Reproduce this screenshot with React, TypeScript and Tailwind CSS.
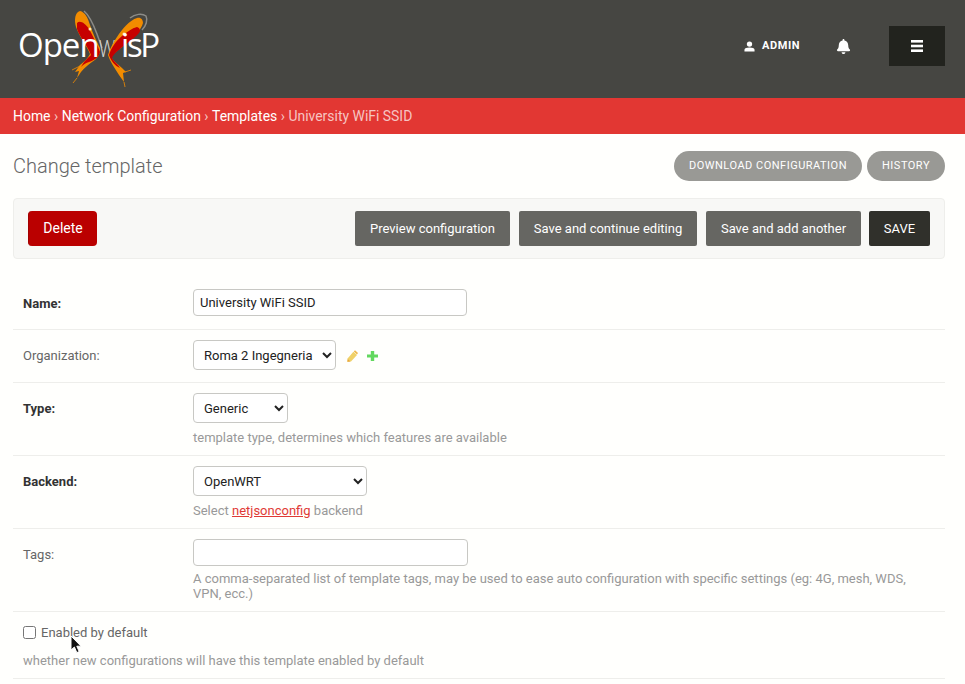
import React from 'react';
import { FaBell } from 'react-icons/fa';

function Logo() {
  return (
    <svg width="150" height="90" viewBox="18 4 150 90" className="block">
      <path d="M84 11 C90 16 94 26 97 34 C99 40 101 44 102 48" stroke="#8c8c88" strokeWidth="1.5" fill="none" />
      <path d="M130 18 C135 14 142 13 146 16 C148 20 146 26 142 30" stroke="#8c8c88" strokeWidth="1.5" fill="none" />
      <text x="0" y="57" fill="#d0d0cc" fontFamily="Open Sans, sans-serif" fontSize="31" fontWeight="300" textAnchor="middle" transform="translate(107 0) scale(0.72 1)">w</text>
      <path d="M80 11 C85 12 88 18 90 25 C93 34 97 42 100 48 C101 54 97 59 92 62 C88 65 84 68 81 72 L77 78 L79 71 L75 72 L80 65 C84 62 88 58 90 54 C87 46 80 38 76 27 C74 20 75 12 80 11 Z" fill="#f28c00" />
      <path d="M77 23 C80 20 85 23 89 29 C93 36 97 44 100 52 C99 57 95 60 89 62 C85 63 83 65 81 67 C84 61 88 58 91 55 C88 46 80 38 77 29 Z" fill="#c60000" />
      <path d="M137 18 C141 17 143 20 143 23 C141 30 134 37 126 44 C118 50 113 54 111 57 C114 62 119 65 122 68 L126 72 L123 73 L124 82 L119 75 C115 68 110 62 108 55 C110 48 113 43 117 37 C122 29 130 20 137 18 Z" fill="#f28c00" />
      <path d="M137 27 C140 28 141 31 139 33 C134 39 126 44 120 49 C116 52 113 55 112 58 C114 62 118 64 120 68 C115 66 111 61 109 55 C111 48 116 41 122 36 C127 32 132 28 137 27 Z" fill="#c60000" />
      <path d="M80 66 L72 70 M77 78 L73 83 M124 82 L125 87 M125 72 L131 70" stroke="#f28c00" strokeWidth="0.8" />
      <circle cx="90" cy="29" r="1.5" fill="#ffe9b0" />
      <circle cx="124" cy="34" r="1.5" fill="#ffe9b0" />
      <text x="18" y="57" fill="#fff" fontFamily="Open Sans, sans-serif" fontSize="33" fontWeight="400" letterSpacing="-1">Open</text>
      <text x="121" y="57" fill="#fff" fontFamily="Open Sans, sans-serif" fontSize="33" fontWeight="400" letterSpacing="-2.4">isP</text>
    </svg>
  );
}

function Row({ label, bold, className, labelClass, children }: { label: string; bold?: boolean; className: string; labelClass?: string; children: React.ReactNode }) {
  return (
    <div className={`flex border-b border-[#eeeeeb] pl-[10px] ${className}`}>
      <div className={`w-[170px] shrink-0 text-[13px] leading-[16px] ${bold ? 'font-bold text-[#333]' : 'text-[#666]'} ${labelClass ?? ''}`}>{label}</div>
      <div className="min-w-0 flex-1">{children}</div>
    </div>
  );
}

const selectClass = 'block h-[30px] rounded-[4px] border border-[#c8c8c4] bg-white pl-[6px] text-[13px] text-[#222]';

export default function App() {
  return (
    <div className="h-[684px] overflow-hidden bg-[#fffffd] font-['Roboto',sans-serif]">
      <header className="flex h-[98px] items-center bg-[#464642] pl-[18px] pr-[20px]">
        <Logo />
        <div className="ml-auto flex items-center pb-[6px]">
          <svg width="11" height="11" viewBox="0 0 12 12" className="mr-[7px]" fill="#fff">
            <circle cx="6" cy="3.4" r="2.9" />
            <path d="M0.5 11.5 V9.6 C0.5 7.8 3 7 6 7 C9 7 11.5 7.8 11.5 9.6 V11.5 Z" />
          </svg>
          <span className="text-[11px] font-bold tracking-[0.55px] text-white">ADMIN</span>
          <FaBell className="ml-[36px] text-[15px] text-white" />
          <div className="ml-[38px] flex h-[40px] w-[56px] items-center justify-center bg-[#22231e]">
            <svg width="12" height="12" viewBox="0 0 12 12" fill="#fff">
              <rect y="0" width="12" height="2.6" />
              <rect y="4.7" width="12" height="2.6" />
              <rect y="9.4" width="12" height="2.6" />
            </svg>
          </div>
        </div>
      </header>

      <nav className="flex h-[36px] items-center bg-[#e23733] pl-[13px] text-[13.95px] text-white">
        Home <span className="mx-[3.5px] text-[#f6c4c2]">›</span> Network Configuration <span className="mx-[3.5px] text-[#f6c4c2]">›</span> Templates <span className="mx-[3.5px] text-[#f6c4c2]">›</span> <span className="text-[#f6c4c2]">University WiFi SSID</span>
      </nav>

      <main className="pl-[13px] pr-[20px]">
        <div className="flex h-[64px] items-center justify-between">
          <h1 className="text-[20px] font-light text-[#666]">Change template</h1>
          <div className="flex gap-[5px]">
            <span className="flex h-[30px] items-center rounded-full bg-[#999995] px-[15px] text-[11px] tracking-[0.5px] text-white">DOWNLOAD CONFIGURATION</span>
            <span className="flex h-[30px] items-center rounded-full bg-[#999995] px-[15px] text-[11px] tracking-[0.5px] text-white">HISTORY</span>
          </div>
        </div>

        <div className="flex h-[61px] items-center rounded-[4px] border border-[#eeeeeb] bg-[#f8f8f6] px-[14px]">
          <button className="h-[35px] w-[69px] rounded-[4px] border-l border-[#a30000] bg-[#ba0000] text-[14px] text-[#fff]">Delete</button>
          <div className="ml-auto flex gap-[9px]">
            <button className="h-[35px] w-[155px] rounded-[2px] bg-[#666662] text-[13px] text-white">Preview configuration</button>
            <button className="h-[35px] w-[178px] rounded-[2px] bg-[#666662] text-[13px] text-white">Save and continue editing</button>
            <button className="h-[35px] w-[155px] rounded-[2px] bg-[#666662] text-[13px] text-white">Save and add another</button>
            <button className="-ml-[1px] h-[35px] w-[61px] rounded-[2px] bg-[#30302b] text-[13px] text-white">SAVE</button>
          </div>
        </div>

        <div className="pt-[17px]">
          <Row label="Name:" bold labelClass="pt-[7px]" className="h-[54px] pt-[13px]">
            <input defaultValue="University WiFi SSID" className="block h-[27px] w-[274px] rounded-[4px] border border-[#c8c8c4] bg-white px-[6px] text-[13px] text-[#222]" />
          </Row>
          <Row label="Organization:" labelClass="pt-[1px]" className="h-[53px] items-center pb-[2px]">
            <div className="flex items-center">
              <select className={`${selectClass} w-[143px]`}>
                <option>Roma 2 Ingegneria</option>
              </select>
              <svg width="11" height="12" viewBox="0 0 11 12" className="ml-[11px] mt-[1px]">
                <path d="M0.6 8.6 L6.4 1.8 L10 5 L4 11.4 L0.4 11.8 Z" fill="#f0d168" />
                <path d="M6.8 1.4 L8 0.2 L11 3 L10 4.6 Z" fill="#efb94e" />
                <path d="M0.8 9 L0.3 11.8 L3.4 11.4 Z" fill="#e8a63c" />
              </svg>
              <svg width="11" height="10" viewBox="0 0 11 10" className="ml-[9px] mt-[1px]" fill="#62d85f">
                <path d="M3.8 0 H7.2 V3.4 H11 V6.6 H7.2 V10 H3.8 V6.6 H0 V3.4 H3.8 Z" />
              </svg>
            </div>
          </Row>
          <Row label="Type:" bold labelClass="pt-[8px]" className="h-[73px] pt-[10px]">
            <select className={`${selectClass} w-[95px]`}>
              <option>Generic</option>
            </select>
            <p className="mt-[7px] text-[13px] leading-[16px] text-[#999]">template type, determines which features are available</p>
          </Row>
          <Row label="Backend:" bold labelClass="pt-[8px]" className="h-[73px] pt-[10px]">
            <select className={`${selectClass} w-[174px]`}>
              <option>OpenWRT</option>
            </select>
            <p className="mt-[7px] text-[13px] leading-[16px] text-[#999]">
              Select <a className="text-[#df3b36] underline">netjsonconfig</a> backend
            </p>
          </Row>
          <Row label="Tags:" labelClass="pt-[8px]" className="h-[83px] pt-[10px]">
            <input className="block h-[27px] w-[275px] rounded-[4px] border border-[#c8c8c4] bg-white" />
            <p className="mt-[5px] pr-[30px] text-[13px] leading-[15px] text-[#999]">
              A comma-separated list of template tags, may be used to ease auto configuration with specific settings (eg: 4G, mesh, WDS, VPN, ecc.)
            </p>
          </Row>
          <div className="relative h-[67px] border-b border-[#eeeeeb] pl-[10px] pt-[13px]">
            <label className="flex items-center text-[13px] leading-[16px] text-[#666]">
              <input type="checkbox" className="mr-[5px] -mt-[2px] h-[13px] w-[13px]" />
              Enabled by default
            </label>
            <p className="mt-[12px] text-[13px] leading-[16px] text-[#999]">whether new configurations will have this template enabled by default</p>
            <svg width="13" height="19" viewBox="0 0 13 19" className="absolute left-[57px] top-[23px]">
              <path d="M1 1 V15 L4.4 12 L6.8 17.6 L9.2 16.6 L6.8 11.2 H11 Z" fill="#111" stroke="#fff" strokeWidth="1" />
            </svg>
          </div>
        </div>
      </main>
    </div>
  );
}
